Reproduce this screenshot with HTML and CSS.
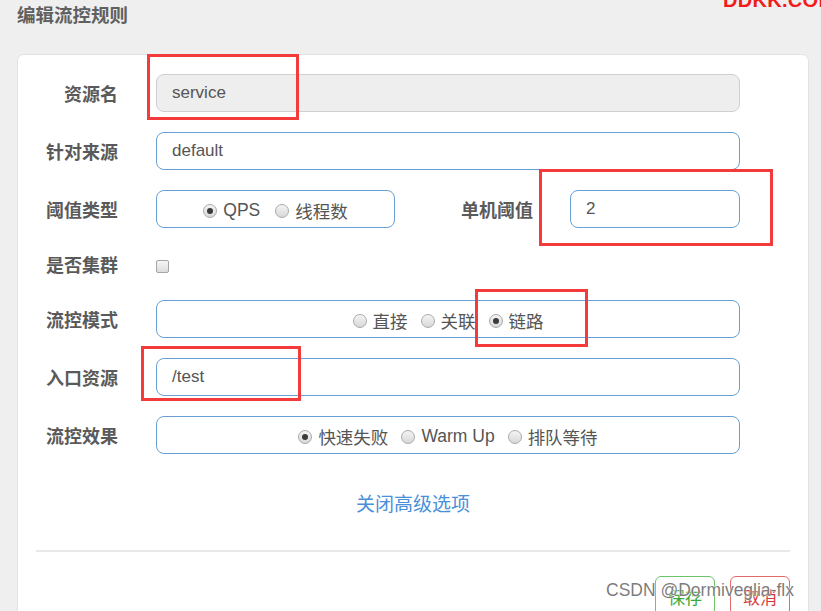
FILE: index.html
```html
<!DOCTYPE html>
<html lang="zh">
<head>
<meta charset="utf-8">
<title>编辑流控规则</title>
<link rel="stylesheet" href="styles.css">
</head>
<body>
<div class="page">
  <div class="brand">DDKK.COM</div>
  <header class="title">编辑流控规则</header>
  <section class="card">
    <div class="row">
      <span class="lbl">资源名</span>
      <div class="field disabled">service</div>
    </div>
    <div class="row">
      <span class="lbl">针对来源</span>
      <div class="field">default</div>
    </div>
    <div class="row">
      <span class="lbl">阈值类型</span>
      <div class="group short">
        <span class="opt"><i class="radio on"></i>QPS</span>
        <span class="opt"><i class="radio"></i>线程数</span>
      </div>
      <span class="lbl lbl2">单机阈值</span>
      <div class="field small">2</div>
    </div>
    <div class="row check-row">
      <span class="lbl">是否集群</span>
      <i class="checkbox"></i>
    </div>
    <div class="row">
      <span class="lbl">流控模式</span>
      <div class="group">
        <span class="opt"><i class="radio"></i>直接</span>
        <span class="opt"><i class="radio"></i>关联</span>
        <span class="opt"><i class="radio on"></i>链路</span>
      </div>
    </div>
    <div class="row">
      <span class="lbl">入口资源</span>
      <div class="field">/test</div>
    </div>
    <div class="row">
      <span class="lbl">流控效果</span>
      <div class="group">
        <span class="opt"><i class="radio on"></i>快速失败</span>
        <span class="opt"><i class="radio"></i>Warm Up</span>
        <span class="opt"><i class="radio"></i>排队等待</span>
      </div>
    </div>
    <div class="advanced"><a class="link">关闭高级选项</a></div>
    <div class="divider"></div>
    <div class="actions">
      <button class="btn save">保存</button>
      <button class="btn cancel">取消</button>
    </div>
  </section>
  <div class="mark m1"></div>
  <div class="mark m2"></div>
  <div class="mark m3"></div>
  <div class="mark m4"></div>
  <div class="watermark">CSDN @Dormiveglia-flx</div>
</div>
</body>
</html>
```
FILE: styles.css
```css
html, body {
  margin: 0;
  padding: 0;
}
body {
  background: #efefef;
  font-family: "Liberation Sans", "Noto Sans CJK SC", sans-serif;
  color: #555;
  width: 821px;
  height: 611px;
  overflow: hidden;
}
.page {
  position: relative;
  width: 821px;
  height: 611px;
  overflow: hidden;
}
.brand {
  position: absolute;
  left: 723px;
  top: -11px;
  font-size: 20px;
  font-weight: bold;
  color: #f21c1c;
  letter-spacing: 0.3px;
  white-space: nowrap;
}
.title {
  height: 54px;
  box-sizing: border-box;
  padding: 2px 0 0 17px;
  font-size: 18.5px;
  font-weight: bold;
  color: #606060;
  line-height: 28px;
}
.card {
  margin-left: 17px;
  width: 792px;
  height: 620px;
  box-sizing: border-box;
  background: #fff;
  border: 1px solid #e2e2e2;
  border-radius: 7px;
  padding-top: 19px;
}
.row {
  display: flex;
  align-items: center;
  height: 38px;
  margin-bottom: 20px;
}
.check-row {
  height: 32px;
}
.lbl {
  width: 100px;
  margin-right: 38px;
  text-align: right;
  font-size: 18px;
  font-weight: bold;
  color: #5a5a5a;
  white-space: nowrap;
  line-height: 38px;
  padding-top: 4px;
}
.lbl2 {
  width: 138px;
  margin-right: 37px;
}
.field {
  width: 584px;
  height: 38px;
  box-sizing: border-box;
  border: 1px solid #6a9fd6;
  border-radius: 8px;
  padding-left: 15px;
  font-size: 17px;
  line-height: 36px;
  color: #555;
  background: #fff;
}
.field.disabled {
  background: #eeeeee;
  border-color: #d0d0d0;
}
.field.small {
  width: 170px;
}
.group {
  width: 584px;
  height: 38px;
  box-sizing: border-box;
  border: 1px solid #6a9fd6;
  border-radius: 8px;
  display: flex;
  justify-content: center;
  align-items: center;
  gap: 13px;
  padding-top: 3px;
  font-size: 17.5px;
  color: #555;
}
.group.short {
  width: 239px;
  gap: 15px;
}
.opt {
  display: inline-flex;
  align-items: center;
  gap: 6px;
  white-space: nowrap;
}
.radio {
  display: inline-block;
  width: 12px;
  height: 12px;
  border-radius: 50%;
  border: 1px solid #a9a9a9;
  background: linear-gradient(#f4f4f4, #d8d8d8);
  position: relative;
  flex: none;
}
.radio.on::after {
  content: "";
  position: absolute;
  left: 3px;
  top: 3px;
  width: 6px;
  height: 6px;
  border-radius: 50%;
  background: #3a3a3a;
}
.checkbox {
  display: inline-block;
  width: 11px;
  height: 11px;
  border: 1px solid #a5a5a5;
  border-radius: 2px;
  background: linear-gradient(#f6f6f6, #dcdcdc);
  margin-top: 5px;
}
.advanced {
  text-align: center;
  margin-top: 36px;
  height: 30px;
  line-height: 30px;
}
.link {
  font-size: 19px;
  color: #4a90d9;
}
.divider {
  margin: 30px 18px 0 18px;
  height: 2px;
  background: #e8e8e8;
}
.actions {
  display: flex;
  justify-content: flex-end;
  gap: 15px;
  margin: 24px 18px 0 0;
}
.btn {
  width: 60px;
  height: 40px;
  box-sizing: border-box;
  background: #fff;
  border-radius: 6px;
  font-family: "Liberation Sans", "Noto Sans CJK SC", sans-serif;
  font-size: 17px;
  padding: 0;
}
.save {
  border: 1px solid #6cc46c;
  color: #3ea83e;
}
.cancel {
  border: 1px solid #e06a6a;
  color: #d43a3a;
}
.mark {
  position: absolute;
  border: 3px solid #f33b3b;
  box-sizing: border-box;
}
.m1 { left: 147px; top: 54px; width: 152px; height: 66px; }
.m2 { left: 539px; top: 169px; width: 234px; height: 77px; }
.m3 { left: 475px; top: 289px; width: 113px; height: 58px; }
.m4 { left: 141px; top: 346px; width: 160px; height: 55px; }
.watermark {
  position: absolute;
  left: 606px;
  top: 580px;
  font-size: 17.5px;
  color: rgba(100, 100, 100, 0.85);
  white-space: nowrap;
  text-shadow: 0 0 1px #fff, 0 0 2px #fff;
}
```
